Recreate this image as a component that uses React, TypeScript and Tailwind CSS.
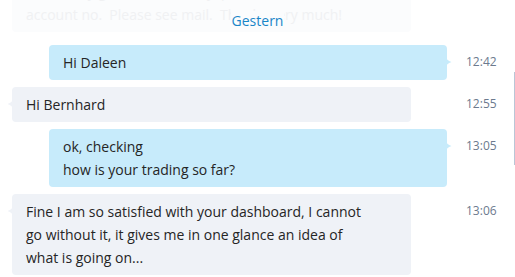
import React from 'react';

const font = { fontFamily: '"Open Sans", "Noto Sans", sans-serif' };

const TailRight = () => (
  <svg width="6" height="12" viewBox="0 0 6 12" className="absolute -right-[5px] top-[11px]">
    <path d="M0 0 C0 3 2 5 5.5 6 C2 7 0 9 0 12 Z" fill="#c7ebfb" />
  </svg>
);

const TailLeft = () => (
  <svg width="6" height="12" viewBox="0 0 6 12" className="absolute -left-[5px] top-[11px]">
    <path d="M6 0 C6 3 4 5 0.5 6 C4 7 6 9 6 12 Z" fill="#eff2f7" />
  </svg>
);

const Row = ({ children, time }: { children: React.ReactNode; time: string }) => (
  <div className="flex items-start">
    <div className="w-[466px]">{children}</div>
    <div className="pt-[5px] text-[12px] leading-[23px] text-[#6c7a8e]">{time}</div>
  </div>
);

const Outgoing = ({ children, time }: { children: React.ReactNode; time: string }) => (
  <Row time={time}>
    <div className="relative ml-[49px] w-[398px] rounded-[4px] bg-[#c7ebfb] px-[14px] py-[6px] text-[14px] leading-[23px] text-[#252525]">
      {children}
      <TailRight />
    </div>
  </Row>
);

const Incoming = ({ children, time }: { children: React.ReactNode; time: string }) => (
  <Row time={time}>
    <div className="relative ml-[12px] w-[399px] rounded-[4px] bg-[#eff2f7] px-[14px] py-[6px] text-[14px] leading-[23px] text-[#252525]">
      {children}
      <TailLeft />
    </div>
  </Row>
);

export default function App() {
  return (
    <div className="relative h-[277px] w-[515px] overflow-hidden bg-white" style={font}>
      <div className="flex flex-col gap-[7px]">
        {/* faded earlier message */}
        <div className="-mt-[26px] mb-[6px] ml-[12px] w-[399px] rounded-[4px] bg-[#fbfcfd] px-[14px] py-[6px] text-[14px] leading-[23px] text-[#f0f1f3]">
          also, I only got licence for my ipad.&nbsp; The same
          <br />
          account no.&nbsp; Please see mail.&nbsp; Thanks very much!
        </div>

        <Outgoing time="12:42">Hi Daleen</Outgoing>
        <Incoming time="12:55">Hi Bernhard</Incoming>
        <Outgoing time="13:05">
          ok, checking
          <br />
          how is your trading so far?
        </Outgoing>
        <Incoming time="13:06">
          Fine I am so satisfied with your dashboard, I cannot
          <br />
          go without it, it gives me in one glance an idea of
          <br />
          what is going on...
        </Incoming>
      </div>

      <div className="absolute left-0 right-0 top-[11px] flex justify-center">
        <span className="bg-[#fbfcfd] px-[1px] text-[14px] leading-[20px] text-[#1a86c8]">Gestern</span>
      </div>

      <div className="absolute right-0 top-[72px] h-[93px] w-px bg-[#b9c6d6]" />
    </div>
  );
}
